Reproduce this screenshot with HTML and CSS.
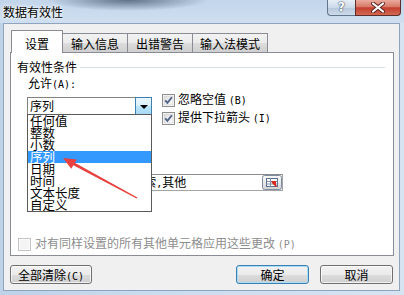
FILE: index.html
```html
<!DOCTYPE html>
<html lang="zh-CN">
<head>
<meta charset="utf-8">
<title>数据有效性</title>
<link rel="stylesheet" href="styles.css">
</head>
<body>
<div class="window">
  <div class="titlebar">
    <span class="title">数据有效性</span>
    <div class="caption">
      <div class="help">?</div>
      <div class="close">
        <svg width="16" height="11" viewBox="0 0 16 11"><path d="M3 1.5 L13 9.5 M13 1.5 L3 9.5" stroke="#5a2420" stroke-width="4" stroke-linecap="round"/><path d="M3 1.5 L13 9.5 M13 1.5 L3 9.5" stroke="#fff" stroke-width="2.2" stroke-linecap="round"/></svg>
      </div>
    </div>
  </div>
  <div class="client">
    <div class="tabs">
      <div class="tab active">设置</div>
      <div class="tab w66">输入信息</div>
      <div class="tab w66">出错警告</div>
      <div class="tab w76">输入法模式</div>
    </div>
    <div class="panel">
      <div class="group"><span>有效性条件</span><span class="line"></span></div>
      <div class="allow-row">
        <div class="allow-col">
          <div class="label">允许<span class="ac">(A):</span></div>
          <div class="combo">
            <span>序列</span>
            <span class="drop-btn"><span class="tri"></span></span>
            <ul class="list">
              <li>任何值</li>
              <li>整数</li>
              <li>小数</li>
              <li class="sel">序列</li>
              <li>日期</li>
              <li>时间</li>
              <li>文本长度</li>
              <li>自定义</li>
            </ul>
          </div>
        </div>
        <div class="checks">
          <div class="check">
            <svg class="cb" width="13" height="13" viewBox="0 0 13 13"><defs><linearGradient id="cg" x1="0" y1="0" x2="1" y2="1"><stop offset="0" stop-color="#dcdcdc"/><stop offset="1" stop-color="#fbfbfb"/></linearGradient></defs><rect x="0.5" y="0.5" width="12" height="12" fill="#fff" stroke="#8e8f8f"/><rect x="2" y="2" width="9" height="9" fill="url(#cg)" stroke="#c9c9c9" stroke-width="0.6"/><path d="M3.2 6.4 L5.4 8.9 L9.9 3.2" fill="none" stroke="#4c6289" stroke-width="1.8"/></svg>
            <span>忽略空值 <span class="ac">(B)</span></span>
          </div>
          <div class="check">
            <svg class="cb" width="13" height="13" viewBox="0 0 13 13"><rect x="0.5" y="0.5" width="12" height="12" fill="#fff" stroke="#8e8f8f"/><rect x="2" y="2" width="9" height="9" fill="url(#cg)" stroke="#c9c9c9" stroke-width="0.6"/><path d="M3.2 6.4 L5.4 8.9 L9.9 3.2" fill="none" stroke="#4c6289" stroke-width="1.8"/></svg>
            <span>提供下拉箭头 <span class="ac">(I)</span></span>
          </div>
        </div>
      </div>
      <div class="source-label">来源<span class="ac">(S):</span></div>
      <div class="field">
        <span>已完成<span class="ac">,</span>未完成<span class="ac">,</span>暂停<span class="ac">,</span>索<span class="ac">,</span>其他</span>
        <span class="ref-btn">
          <svg width="20" height="15" viewBox="0 0 20 15"><defs><linearGradient id="rg" x1="0" y1="0" x2="0" y2="1"><stop offset="0" stop-color="#fafafa"/><stop offset="0.5" stop-color="#e9e9e9"/><stop offset="1" stop-color="#d2d2d2"/></linearGradient></defs><rect x="0.5" y="0.5" width="19" height="14" rx="2" fill="url(#rg)" stroke="#7c8ca3"/><rect x="4.5" y="3.5" width="11" height="8" fill="#fff" stroke="#5b6f90"/><path d="M4.5 6.5 H15.5 M4.5 9 H15.5 M8.5 3.5 V11.5" stroke="#7f90ab" stroke-width="1"/><path d="M9 6 L14 6 L14 11 Z" fill="#d9281f"/><path d="M10 7 L14.5 11.5" stroke="#d9281f" stroke-width="1.6"/></svg>
        </span>
      </div>
      <div class="apply-row">
        <span class="cb-dis"></span>
        <span>对有同样设置的所有其他单元格应用这些更改 <span class="ac">(P)</span></span>
      </div>
    </div>
    <div class="buttons">
      <div class="btn w82">全部清除<span class="ac">(C)</span></div>
      <div class="spacer"></div>
      <div class="btn default w73">确定</div>
      <div class="btn w73">取消</div>
    </div>
  </div>
  <svg class="arrow" width="404" height="295" viewBox="0 0 404 295">
    <polygon points="137.4,197.6 136.6,198.4 72.9,165.0 74.3,162.4" fill="#e8403f"/>
    <polygon points="63,158 76.8,159.4 71.3,168.8" fill="#e8403f"/>
  </svg>
</div>
</body>
</html>
```

FILE: styles.css
```css
* { box-sizing: border-box; }
html, body { margin: 0; padding: 0; }
body {
  width: 404px;
  height: 295px;
  overflow: hidden;
  font-family: "Noto Sans CJK SC", "Noto Sans", sans-serif;
  font-size: 12px;
  color: #000;
  background: #c6d9ee;
}
.window {
  position: relative;
  height: 295px;
  display: flex;
  flex-direction: column;
  background: linear-gradient(90deg, #bed2e8, #cadcef 40%, #d6e4f2);
}
.titlebar {
  flex: none;
  height: 23px;
  display: flex;
  align-items: flex-start;
  background:
    radial-gradient(ellipse 80px 11px at 128px 0px, rgba(70, 88, 112, 0.8), rgba(70, 88, 112, 0) 100%),
    linear-gradient(#c2d5ea, #cfdff0);
}
.title {
  padding: 4px 0 0 3px;
  line-height: 15px;
  text-shadow: 0 0 5px #fff, 0 0 3px #fff;
}
.caption {
  margin-left: auto;
  margin-right: 3px;
  display: flex;
}
.help {
  width: 28px;
  height: 16px;
  border: 1px solid #62768d;
  border-top: none;
  border-right: none;
  border-radius: 0 0 0 4px;
  background: linear-gradient(#e6eef7, #ccdaea 50%, #b6c8dc 51%, #cddbea);
  color: #fff;
  font-family: "DejaVu Sans", sans-serif;
  font-weight: bold;
  font-size: 12px;
  line-height: 15px;
  text-align: center;
  text-shadow: 0 0 2px #34465c, 0 0 1px #34465c;
}
.close {
  width: 46px;
  height: 16px;
  border: 1px solid #5c2d2a;
  border-top: none;
  border-radius: 0 0 4px 0;
  background: linear-gradient(#eaab9e, #d77a68 45%, #c43e2e 52%, #d26a53);
  display: flex;
  justify-content: center;
  align-items: center;
}
.client {
  flex: 1;
  margin: 0 4px 4px 3px;
  background: #f0f0f0;
  border: 1px solid #8ea3bd;
  padding-top: 6px;
  display: flex;
  flex-direction: column;
}
.tabs {
  display: flex;
  align-items: flex-end;
  height: 22px;
  margin-left: 7px;
  position: relative;
  z-index: 2;
}
.tab {
  height: 19px;
  border: 1px solid #898c95;
  border-bottom: none;
  padding-top: 2px;
  line-height: 16px;
  text-align: center;
  margin-left: -1px;
  background: linear-gradient(#f2f2f2, #ebebeb 50%, #dddddd 51%, #cfcfcf);
}
.tab.active {
  width: 52px;
  height: 23px;
  margin-left: 0;
  margin-bottom: -1px;
  padding-top: 5px;
  background: #fff;
  position: relative;
  z-index: 3;
}
.w66 { width: 66px; }
.w76 { width: 76px; }
.panel {
  position: relative;
  z-index: 1;
  height: 204px;
  margin: 0 5px 0 6px;
  background: #fff;
  border: 1px solid #898c95;
  padding: 6px 0 0 6px;
}
.group {
  display: flex;
  align-items: center;
  height: 16px;
  line-height: 16px;
}
.group .line {
  flex: 1;
  height: 1px;
  margin: 0 8px 0 3px;
  background: #d5dfe5;
}
.ac {
  font-family: "DejaVu Sans Mono", monospace;
  font-size: 10px;
}
.allow-row {
  display: flex;
  margin-left: 10px;
}
.allow-col { width: 125px; }
.label {
  padding-left: 1px;
  line-height: 16px;
}
.combo {
  position: relative;
  margin-top: 4px;
  height: 18px;
  border: 1px solid #828282;
  padding-left: 2px;
  line-height: 16px;
  background: #fff;
}
.drop-btn {
  position: absolute;
  right: -1px;
  top: -1px;
  width: 17px;
  height: 18px;
  border: 1px solid #3c7fb1;
  background: linear-gradient(#eaf6fd, #d9f0fc 50%, #bee6fd 51%, #a7d9f5);
  display: flex;
  justify-content: center;
  align-items: center;
}
.tri {
  width: 0;
  height: 0;
  border-left: 4px solid transparent;
  border-right: 4px solid transparent;
  border-top: 4px solid #000;
  margin-top: 1px;
}
.list {
  position: absolute;
  left: -1px;
  top: 16px;
  width: 125px;
  margin: 0;
  padding: 0;
  list-style: none;
  border: 1px solid #5a5a5a;
  background: #fff;
  z-index: 5;
}
.list li {
  height: 12px;
  line-height: 12px;
  padding-left: 2px;
  font-size: 12.5px;
  white-space: nowrap;
}
.list li.sel {
  background: #3399ff;
  color: #fff;
}
.checks {
  margin-left: 10px;
  margin-top: 16px;
}
.check {
  display: flex;
  align-items: center;
  height: 18px;
  line-height: 16px;
}
.cb { flex: none; margin-right: 3px; }
.source-label {
  margin: 27px 0 0 11px;
  line-height: 16px;
}
.field {
  margin: 2px 0 0 10px;
  width: 256px;
  height: 17px;
  border: 1px solid #a4a4a4;
  border-top-color: #8c8c8c;
  padding-left: 2px;
  display: flex;
  align-items: center;
  line-height: 15px;
  white-space: nowrap;
}
.ref-btn {
  margin-left: auto;
  display: flex;
}
.apply-row {
  margin: 45px 0 0 1px;
  display: flex;
  align-items: center;
  height: 16px;
  line-height: 16px;
  color: #8d8d8d;
}
.cb-dis {
  width: 13px;
  height: 13px;
  margin-right: 4px;
  border: 1px solid #c4c4c4;
  background: #f4f4f4;
  box-shadow: inset 0 0 0 1px #fbfbfb;
}
.buttons {
  margin-top: 9px;
  padding: 0 6px;
  display: flex;
}
.spacer { flex: 1; }
.btn {
  height: 19px;
  border: 1px solid #707070;
  border-radius: 3px;
  background: linear-gradient(#f2f2f2, #ebebeb 50%, #dddddd 51%, #cfcfcf);
  box-shadow: inset 0 0 0 1px rgba(255, 255, 255, 0.7);
  text-align: center;
  line-height: 17px;
}
.btn.default {
  border-color: #3c7fb1;
  box-shadow: inset 0 0 0 1px #a9dcf6;
  margin-right: 11px;
}
.w82 { width: 82px; }
.w73 { width: 73px; }
.arrow {
  position: absolute;
  left: 0;
  top: 0;
  z-index: 10;
  pointer-events: none;
}
```
